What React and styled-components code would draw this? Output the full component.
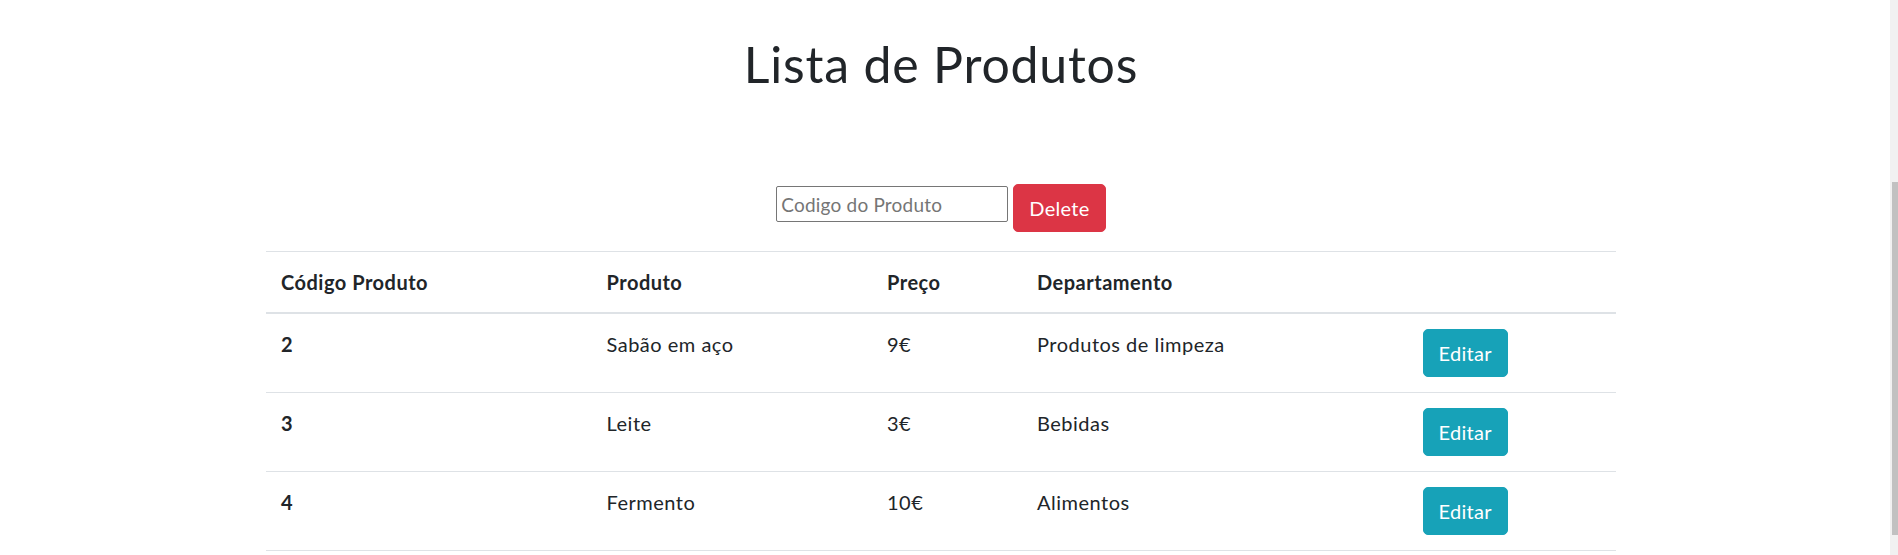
import React from 'react';
import styled, { createGlobalStyle } from 'styled-components';

const GlobalStyle = createGlobalStyle`
  body {
    margin: 0;
    background: #fff;
    color: #212529;
    font-family: Lato, "Noto Sans", sans-serif;
    font-size: 20px;
    line-height: 1.5;
    letter-spacing: 0.5px;
  }
`

const Page = styled.div`
  width: calc(100% - 16px);
  padding: 34px 0 320px;
`

// browser scrollbar, cut off at the right edge of the shot
const ScrollTrack = styled.div`
  position: fixed;
  top: 0;
  right: 0;
  width: 8px;
  height: 100vh;
  background: #f1f1f1;
`

const ScrollThumb = styled.div`
  position: absolute;
  top: 182px;
  right: 0;
  width: 6px;
  height: 353px;
  background: #c1c1c1;
`

const Title = styled.h1`
  margin: 0;
  font-size: 50px;
  font-weight: 400;
  line-height: 60px;
  letter-spacing: 0.8px;
  text-align: center;
`

const Toolbar = styled.div`
  margin-top: 90px;
  display: flex;
  justify-content: center;
  align-items: flex-start;
  gap: 5px;
`

const CodeInput = styled.input`
  box-sizing: border-box;
  margin-top: 2px;
  width: 232px;
  height: 36px;
  padding: 1px 4px;
  border: 1px solid #767676;
  border-radius: 2px;
  font-family: inherit;
  font-size: 19px;
  letter-spacing: 0.2px;
  color: #212529;
  &::placeholder {
    color: #757575;
  }
`

const Button = styled.button`
  padding: 8px 15px;
  border: 1px solid ${props => props.color};
  border-radius: 5px;
  background-color: ${props => props.color};
  color: #fff;
  font-family: inherit;
  font-size: 20px;
  line-height: 30px;
  letter-spacing: 0.3px;
  &:hover {
    cursor: pointer;
  }
`

const Table = styled.table`
  width: 1350px;
  margin: 19px auto 0;
  border-collapse: collapse;
  table-layout: fixed;
`

const HeadCell = styled.th`
  padding: 15px;
  text-align: left;
  font-weight: 700;
  vertical-align: bottom;
  border-top: 1px solid #dee2e6;
  border-bottom: 2px solid #dee2e6;
`

const Cell = styled.td`
  padding: 15px;
  vertical-align: top;
  border-top: 1px solid #dee2e6;
  font-weight: ${props => (props.bold ? 700 : 400)};
`

const LastRow = styled.tr`
  border-bottom: 1px solid #dee2e6;
`

const produtos = [
  { id: 2, nome: 'Sabão em aço', preco: '9€', departamento: 'Produtos de limpeza' },
  { id: 3, nome: 'Leite', preco: '3€', departamento: 'Bebidas' },
  { id: 4, nome: 'Fermento', preco: '10€', departamento: 'Alimentos' },
]

const colunas = [325.5, 280.5, 150, 385.5, 208.5]

const App = () => {
  return (
    <Page>
      <GlobalStyle />
      <ScrollTrack><ScrollThumb /></ScrollTrack>

      <Title>Lista de Produtos</Title>

      <Toolbar>
        <CodeInput placeholder="Codigo do Produto" />
        <Button color="#dc3545">Delete</Button>
      </Toolbar>

      <Table>
        <colgroup>
          {colunas.map((w, i) => <col key={i} style={{ width: w }} />)}
        </colgroup>
        <thead>
          <tr>
            <HeadCell>Código Produto</HeadCell>
            <HeadCell>Produto</HeadCell>
            <HeadCell>Preço</HeadCell>
            <HeadCell>Departamento</HeadCell>
            <HeadCell />
          </tr>
        </thead>
        <tbody>
          {produtos.map((p, i) => {
            const Row = i === produtos.length - 1 ? LastRow : 'tr'
            return (
              <Row key={p.id}>
                <Cell bold>{p.id}</Cell>
                <Cell>{p.nome}</Cell>
                <Cell>{p.preco}</Cell>
                <Cell>{p.departamento}</Cell>
                <Cell><Button color="#17a2b8">Editar</Button></Cell>
              </Row>
            )
          })}
        </tbody>
      </Table>
    </Page>
  );
};

export default App;
